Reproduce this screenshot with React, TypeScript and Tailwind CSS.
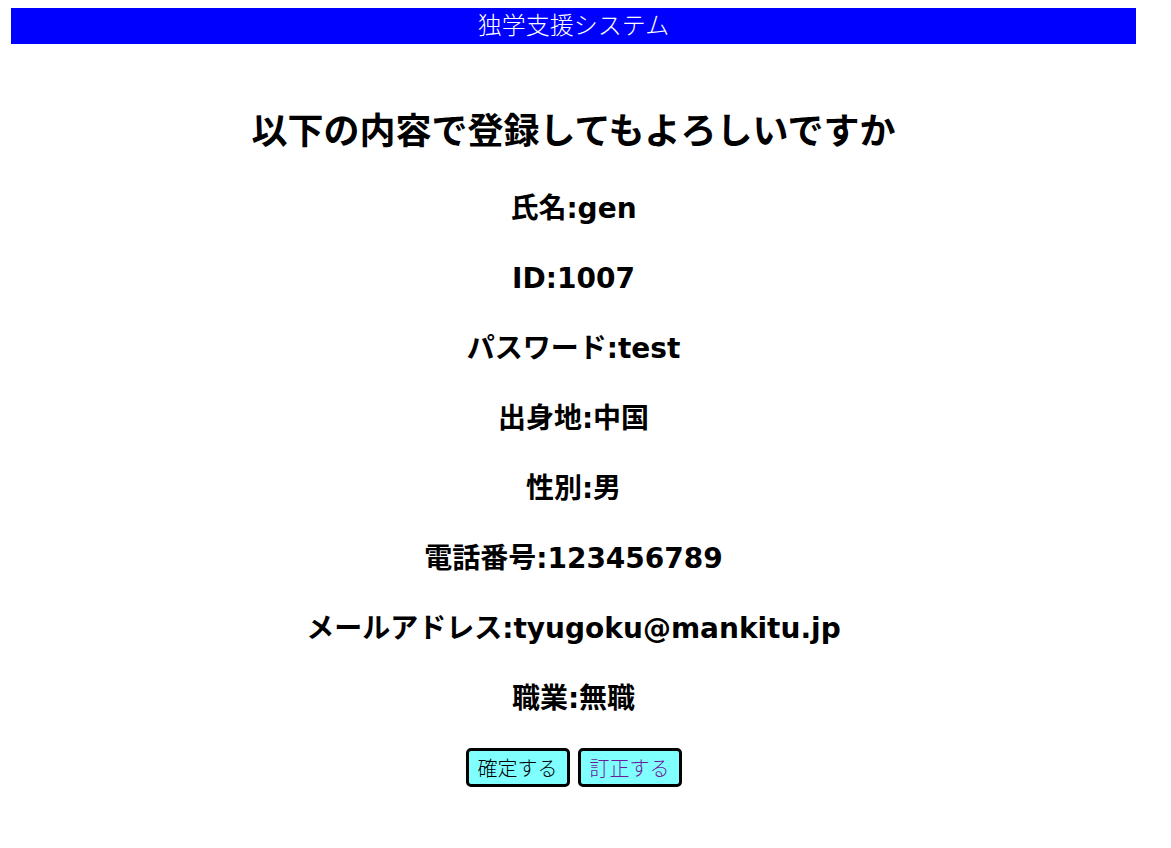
const rows = [
  '氏名:gen',
  'ID:1007',
  'パスワード:test',
  '出身地:中国',
  '性別:男',
  '電話番号:123456789',
  'メールアドレス:tyugoku@mankitu.jp',
  '職業:無職',
];

export default function App() {
  return (
    <div className="min-h-[848px] bg-white font-['DejaVu_Sans','Noto_Sans_CJK_JP',sans-serif] text-black">
      <div className="mx-[11px] w-[1125px]">
        <header className="mt-[8px] flex h-[36px] items-center justify-center bg-[#0000ff] pb-[5px] text-[24px] text-white font-['Noto_Sans_CJK_JP',sans-serif] font-light">
          独学支援システム
        </header>
        <h1 className="mt-[60px] flex h-[48px] items-center justify-center text-[36px] font-bold font-['Noto_Sans_CJK_JP',sans-serif]">
          以下の内容で登録してもよろしいですか
        </h1>
        <div className="mt-[22px] flex flex-col">
          {rows.map((r) => (
            <h3 key={r} className="flex h-[70px] items-center justify-center text-[28px] font-bold">
              {r}
            </h3>
          ))}
        </div>
        <div className="mt-[14px] flex justify-center gap-[8px] font-['Noto_Sans_CJK_JP',sans-serif]">
          <button className="flex h-[39px] w-[104px] items-center justify-center rounded-[5px] border-[3px] border-black bg-[#80ffff] text-[20px] font-light text-black">
            確定する
          </button>
          <button className="flex h-[39px] w-[104px] items-center justify-center rounded-[5px] border-[3px] border-black bg-[#80ffff] text-[20px] font-light text-[#6a1b9a]">
            訂正する
          </button>
        </div>
      </div>
    </div>
  );
}
